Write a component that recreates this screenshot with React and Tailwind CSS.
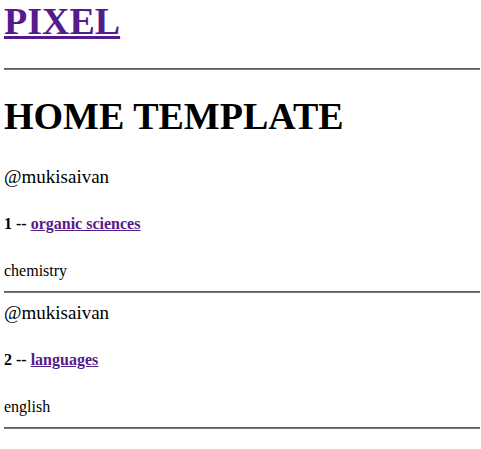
const posts = [
  { id: 1, author: "@mukisaivan", title: "organic sciences", body: "chemistry" },
  { id: 2, author: "@mukisaivan", title: "languages", body: "english" },
];

function Rule() {
  return <div className="h-[2px] border-t border-t-[#5c5c5c] border-b border-b-[#7a7a7a]" />;
}

export default function App() {
  return (
    <div className="min-h-screen bg-white text-black pl-1 pr-[1px] font-['Liberation_Serif',serif]">
      {/* Header */}
      <h1 className="text-[38px] font-bold leading-[42px]">
        <a href="#" className="text-[#551a8b] underline">
          PIXEL
        </a>
      </h1>
      <div className="mt-[26px]">
        <Rule />
      </div>

      {/* Page title */}
      <h1 className="mt-[24px] text-[38px] font-bold leading-[44px]">HOME TEMPLATE</h1>

      {/* Posts */}
      {posts.map((post, i) => (
        <div key={post.id} className={i === 0 ? "mt-[28px]" : "mt-[9px]"}>
          <p className="text-[19px] leading-[22px]">{post.author}</p>
          <h4 className="mt-[27px] text-base font-bold leading-[18px]">
            {post.id} --{" "}
            <a href="#" className="text-[#551a8b] underline">
              {post.title}
            </a>
          </h4>
          <p className="mt-[29px] text-base leading-[18px]">{post.body}</p>
          <div className="mt-[11px]">
            <Rule />
          </div>
        </div>
      ))}
    </div>
  );
}
